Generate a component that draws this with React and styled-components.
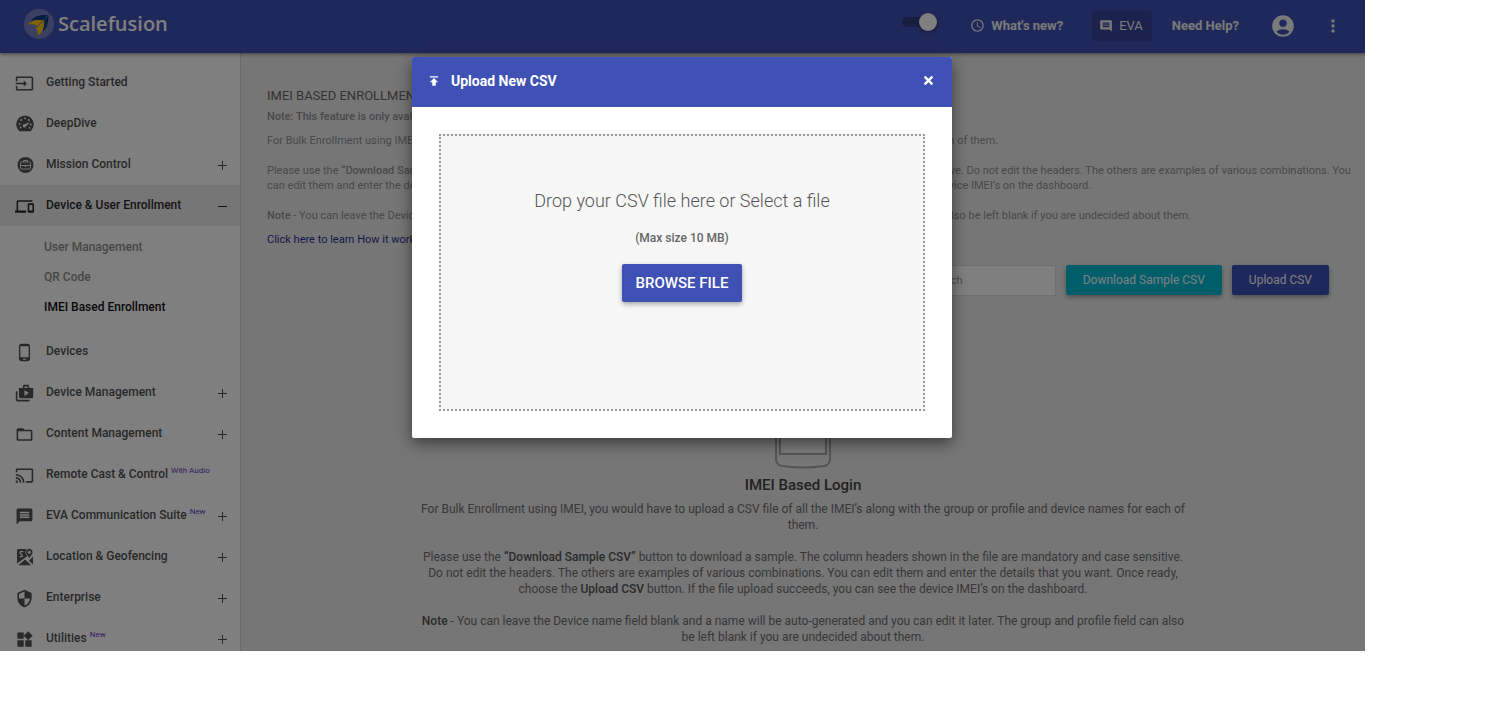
import React from "react";
import styled, { createGlobalStyle, css } from "styled-components";
import {
  MdInput, MdDevices, MdPhoneAndroid, MdShopTwo, MdFolderOpen, MdCast, MdMessage,
  MdSecurity, MdWidgets, MdPublish, MdAccessTime, MdComment, MdAccountCircle, MdMoreVert,
} from "react-icons/md";
import { FaTimes } from "react-icons/fa";

const GlobalStyle = createGlobalStyle`
  * { box-sizing: border-box; }
  body { margin: 0; background: #fff; font-family: Roboto, "Liberation Sans", sans-serif; font-size: 12px; color: #555; }
  button, input { font-family: inherit; }
  p, h1, h2, ul { margin: 0; padding: 0; }
  a { color: inherit; text-decoration: none; }
`;

const Page = styled.div`
  display: flex;
  height: 100vh;
  padding: 0 9vw 66px 0;
`;

const Shell = styled.div`
  position: relative;
  flex: 1;
  min-width: 0;
  display: flex;
  flex-direction: column;
  overflow: hidden;
`;

const Header = styled.header`
  display: flex;
  align-items: center;
  flex: 0 0 53px;
  padding: 0 24px 2px;
  background: #3f51b5;
  color: #fff;
  box-shadow: 0 1px 4px rgba(0, 0, 0, 0.5);
  z-index: 1;
`;

const Brand = styled.a`
  display: flex;
  align-items: center;
  gap: 4px;
  margin-right: auto;
  padding-bottom: 4px;
  font-family: "Open Sans", "Noto Sans", sans-serif;
  font-size: 20px;
  font-weight: 600;
  line-height: 30px;
`;

const ToggleLabel = styled.label`
  display: flex;
  margin-right: 33px;
  padding-bottom: 8px;
`;

const Toggle = styled.input`
  appearance: none;
  display: flex;
  align-items: center;
  justify-content: flex-end;
  width: 35px;
  height: 10px;
  margin: 0;
  border-radius: 5px;
  background: #303c80;
  &::before {
    content: "";
    width: 18px;
    height: 18px;
    border-radius: 50%;
    background: #fff;
    box-shadow: 0 1px 4px rgba(0, 0, 0, 0.4);
  }
`;

const HeaderButton = styled.button`
  display: flex;
  align-items: center;
  gap: 6px;
  height: 31px;
  padding: ${(p) => (p.$filled ? "0 9px 0 7px" : "0")};
  margin-right: ${(p) => p.$gap}px;
  border: 0;
  border-radius: 4px;
  background: ${(p) => (p.$filled ? "#39459c" : "transparent")};
  color: #f4f4f4;
  font-size: 13px;
  font-weight: ${(p) => (p.$filled ? 400 : 700)};
`;

const Columns = styled.div`
  display: flex;
  flex: 1;
  min-height: 0;
`;

const Sidebar = styled.nav`
  flex: 0 0 241px;
  padding-top: 9px;
  background: #fff;
  border-right: 1px solid #d8d8d8;
  overflow: hidden;
`;

const List = styled.ul`
  list-style: none;
`;

const NavItem = styled.a`
  display: flex;
  align-items: center;
  height: 41px;
  padding: 0 11px 1px 15px;
  font-weight: 500;
  color: ${(p) => (p.$active ? "#2a2a2a" : "#515151")};
  background: ${(p) => (p.$active ? "#ededed" : "transparent")};
`;

const IconSlot = styled.span`
  display: flex;
  justify-content: center;
  flex: 0 0 19px;
  margin-right: 12px;
  padding-top: 2px;
`;

const ExpandSlot = styled.span`
  display: flex;
  padding: 3px 1px 0 0;
`;

const NavText = styled.span`
  flex: 1;
  white-space: nowrap;
`;

const Badge = styled.sup`
  margin-left: 3px;
  font-size: 8px;
  font-weight: 400;
  line-height: 8px;
  color: #6a35c4;
`;

const SubList = styled.ul`
  list-style: none;
  padding: 6px 0 9px 44px;
`;

const SubItem = styled.a`
  display: flex;
  align-items: center;
  height: 30px;
  font-weight: 500;
  color: ${(p) => (p.$active ? "#111" : "#8d8d8d")};
`;

const Main = styled.main`
  flex: 1;
  min-width: 0;
  padding: 34px 12px 0;
  background: #ededed;
  overflow: hidden;
`;

const Intro = styled.section`
  padding-left: 14px;
`;

const PageTitle = styled.h1`
  font-size: 13px;
  font-weight: 400;
  line-height: 18px;
  color: #666;
`;

const Info = styled.p`
  font-size: 11px;
  line-height: 15px;
  color: #929292;
  margin-top: ${(p) => p.$top}px;
  font-weight: ${(p) => (p.$strong ? 500 : 400)};
  strong { font-weight: 500; }
`;

const LearnLink = styled.a`
  color: #302f94;
`;

const Toolbar = styled.div`
  display: flex;
  justify-content: flex-end;
  gap: 10px;
  margin-top: 18px;
  padding-right: 24px;
`;

const SearchBox = styled.input`
  width: 140px;
  height: 31px;
  padding: 0 12px;
  border: 1px solid #ddd;
  background: #fff;
  font-size: 11px;
  &::placeholder { color: #999; opacity: 1; }
`;

const raised = css`
  border: 0;
  border-radius: 2px;
  box-shadow: 0 2px 5px rgba(0, 0, 0, 0.35);
  color: #fff;
`;

const ActionButton = styled.button`
  ${raised}
  height: 30px;
  padding: 0 17px;
  background: ${(p) => (p.$primary ? "#3f51b5" : "#00bcd4")};
  font-size: 12px;
`;

const EmptyState = styled.section`
  display: flex;
  flex-direction: column;
  align-items: center;
  width: 770px;
  max-width: 100%;
  margin: 43px auto 0;
  text-align: center;
`;

const EmptyTitle = styled.h2`
  margin-top: 6px;
  font-size: 15px;
  font-weight: 500;
  line-height: 20px;
  color: #444;
`;

const EmptyText = styled.p`
  margin-top: ${(p) => p.$top}px;
  line-height: 16px;
  color: #6f6f6f;
  strong { font-weight: 500; color: #555; }
`;

const Overlay = styled.div`
  position: absolute;
  inset: 0;
  z-index: 2;
  display: flex;
  justify-content: center;
  align-items: flex-start;
  padding: 57px 1px 0 0;
  background: rgba(0, 0, 0, 0.5);
`;

const Dialog = styled.div`
  width: 540px;
  border-radius: 2px;
  overflow: hidden;
  background: #fff;
  box-shadow: 0 5px 15px rgba(0, 0, 0, 0.5);
`;

const DialogHeader = styled.div`
  display: flex;
  align-items: center;
  height: 50px;
  padding: 0 17px 2px 15px;
  background: #3f51b5;
  color: #fff;
`;

const DialogTitle = styled.h2`
  flex: 1;
  margin-left: 10px;
  font-size: 14px;
  font-weight: 700;
`;

const CloseButton = styled.button`
  display: flex;
  padding: 0 0 2px;
  border: 0;
  background: transparent;
  color: #fff;
`;

const DialogBody = styled.div`
  padding: 27px;
`;

const DropZone = styled.div`
  display: flex;
  flex-direction: column;
  align-items: center;
  height: 277px;
  padding-top: 53px;
  border: 2px dotted #999;
  background: #f7f7f7;
`;

const DropText = styled.p`
  font-size: 18px;
  font-weight: 300;
  line-height: 24px;
  color: #555;
`;

const DropHint = styled.p`
  margin-top: 17px;
  font-size: 12px;
  font-weight: 500;
  line-height: 16px;
  color: #666;
`;

const BrowseButton = styled.button`
  ${raised}
  height: 38px;
  margin-top: 18px;
  padding: 0 14px;
  background: #3f51b5;
  font-size: 15px;
  font-weight: 500;
`;

const LogoMark = () => (
  <svg width="30" height="30" viewBox="0 0 30 30" aria-hidden="true">
    <circle cx="15" cy="15" r="15" fill="#7780c4" />
    <path d="M6.500 12.500C9.500 7.500 14 5.500 24.500 6C24.500 13 23.500 19.500 18.500 22.500L19.500 11.500L12 10.800Z" fill="#063a80" />
    <path d="M4 15.500C7 11.500 11.500 10.500 20 11L13.500 17.200C11 15.300 8 15 4 15.500Z" fill="#ffc400" />
    <path d="M20.200 11.300C20.500 18.500 19 23.500 14 26.500C14.200 23.500 13.200 20.500 11.500 19Z" fill="#ffc400" />
    <path d="M12 18.800L24.500 6" stroke="#7780c4" strokeWidth="1" />
  </svg>
);

const GaugeIcon = () => (
  <svg width="18" height="18" viewBox="0 0 18 18" aria-hidden="true">
    <path d="M9 .8A8.600 8.600 0 0 1 15.600 15L14.500 16.200H3.500L2.400 15A8.600 8.600 0 0 1 9 .8Z" fill="currentColor" />
    <g fill="#fff">
      <circle cx="9" cy="3.400" r=".9" />
      <circle cx="5.200" cy="5" r=".9" />
      <circle cx="12.800" cy="5" r=".9" />
      <circle cx="3.500" cy="8.800" r=".9" />
      <circle cx="14.700" cy="9.500" r=".9" />
      <circle cx="4.500" cy="12.500" r=".9" />
      <circle cx="13.500" cy="12.800" r=".9" />
    </g>
    <path d="M14 7L9.900 11.300A1.600 1.600 0 1 1 8.600 9.300Z" fill="#fff" />
  </svg>
);

const MissionIcon = () => (
  <svg width="18" height="18" viewBox="0 0 18 18" aria-hidden="true">
    <circle cx="9.500" cy="9" r="8" fill="#555" />
    <path d="M7.500 6V4.500h4V6" fill="none" stroke="#eee" strokeWidth="1" />
    <rect x="4.500" y="6" width="10" height="7" rx="1" fill="none" stroke="#ddd" strokeWidth="1" />
    <path d="M4.500 9.500h10" stroke="#eee" strokeWidth="1" />
    <circle cx="9.500" cy="9.800" r="1.100" fill="#eee" />
  </svg>
);

const MapIcon = () => (
  <svg width="18" height="18" viewBox="0 0 18 18" aria-hidden="true">
    <path d="M2.500 1H10.500C9.300 4 10 6 11.500 8L1 15.500V2.500Q1 1 2.500 1Z" fill="currentColor" />
    <path d="M7.200 4.200Q5.800 2.700 4.500 3.700T5 6T6.600 8T3.600 8.600" fill="none" stroke="#fff" strokeWidth="1.200" />
    <path d="M2.500 17.200L9 11.500L15.300 17.200Z" fill="currentColor" />
    <path d="M13 12.800L17 8.500V16.500z" fill="currentColor" />
    <path
      d="M13.300 .5a3.600 3.600 0 0 1 3.600 3.600c0 2.500-2.300 3.500-3.600 7.200c-1.300-3.700-3.600-4.700-3.600-7.200A3.600 3.600 0 0 1 13.300 .5z"
      fill="currentColor"
      stroke="#fff"
      strokeWidth=".7"
    />
    <circle cx="13.300" cy="4.200" r="1.500" fill="#fff" />
  </svg>
);

const ExpandMark = ({ open }) => (
  <svg width="11" height="11" viewBox="0 0 11 11" aria-hidden="true">
    <path d={open ? "M1 5.500H10" : "M1 5.500H10M5.500 1V10"} stroke="currentColor" />
  </svg>
);

const PhoneDrawing = () => (
  <svg width="58" height="130" viewBox="0 0 58 130" aria-hidden="true">
    <path
      d="M2 12Q2 5 8 4Q29 0 50 4Q56 5 56 12V120Q56 126 50 127Q29 130 8 127Q2 126 2 120Z"
      fill="#efefef"
      stroke="#aaa"
      strokeWidth="2"
    />
    <rect x="6" y="16" width="46" height="99" fill="#f7f7f7" stroke="#aaa" strokeWidth="2" />
  </svg>
);

const TOP_ITEMS = [
  { label: "Getting Started", icon: <MdInput size={19} /> },
  { label: "DeepDive", icon: <GaugeIcon /> },
  { label: "Mission Control", icon: <MissionIcon />, expand: true },
  { label: "Device & User Enrollment", icon: <MdDevices size={19} />, expand: true, active: true },
];

const SUB_ITEMS = [
  { label: "User Management" },
  { label: "QR Code" },
  { label: "IMEI Based Enrollment", active: true },
];

const BOTTOM_ITEMS = [
  { label: "Devices", icon: <MdPhoneAndroid size={19} /> },
  { label: "Device Management", icon: <MdShopTwo size={19} />, expand: true },
  { label: "Content Management", icon: <MdFolderOpen size={19} />, expand: true },
  { label: "Remote Cast & Control", icon: <MdCast size={19} />, badge: "With Audio" },
  { label: "EVA Communication Suite", icon: <MdMessage size={19} />, badge: "New", expand: true },
  { label: "Location & Geofencing", icon: <MapIcon />, expand: true },
  { label: "Enterprise", icon: <MdSecurity size={19} />, expand: true },
  { label: "Utilities", icon: <MdWidgets size={19} />, badge: "New", expand: true },
];

const NavEntry = ({ item }) => (
  <li>
    <NavItem href="#" $active={item.active}>
      <IconSlot>{item.icon}</IconSlot>
      <NavText>
        {item.label}
        {item.badge && <Badge>{item.badge}</Badge>}
      </NavText>
      {item.expand && (
        <ExpandSlot>
          <ExpandMark open={item.active} />
        </ExpandSlot>
      )}
    </NavItem>
  </li>
);

export default function App() {
  return (
    <Page>
      <GlobalStyle />
      <Shell>
        <Header>
          <Brand href="#">
            <LogoMark />
            Scalefusion
          </Brand>
          <ToggleLabel>
            <Toggle type="checkbox" role="switch" defaultChecked aria-label="Switch dashboard" />
          </ToggleLabel>
          <HeaderButton type="button" $gap={29}>
            <MdAccessTime size={15} />
            What's new?
          </HeaderButton>
          <HeaderButton type="button" $filled $gap={20}>
            <MdComment size={14} />
            EVA
          </HeaderButton>
          <HeaderButton type="button" $gap={31}>Need Help?</HeaderButton>
          <HeaderButton type="button" aria-label="Account" $gap={27}>
            <MdAccountCircle size={26} />
          </HeaderButton>
          <HeaderButton type="button" aria-label="More options" $gap={-2}>
            <MdMoreVert size={20} />
          </HeaderButton>
        </Header>

        <Columns>
          <Sidebar>
            <List>
              {TOP_ITEMS.map((item) => (
                <NavEntry key={item.label} item={item} />
              ))}
            </List>
            <SubList>
              {SUB_ITEMS.map((item) => (
                <li key={item.label}>
                  <SubItem href="#" $active={item.active}>{item.label}</SubItem>
                </li>
              ))}
            </SubList>
            <List>
              {BOTTOM_ITEMS.map((item) => (
                <NavEntry key={item.label} item={item} />
              ))}
            </List>
          </Sidebar>

          <Main>
            <Intro>
              <PageTitle>IMEI BASED ENROLLMENT</PageTitle>
              <Info $top={4} $strong>Note: This feature is only available on Enterprise plan.</Info>
              <Info $top={9}>
                For Bulk Enrollment using IMEI, you would have to upload a CSV file of all the IMEI’s along with the
                group or profile and device names for each of them.
              </Info>
              <Info $top={15}>
                Please use the <strong>“Download Sample CSV”</strong> button to download a sample. The column headers
                shown in the file are mandatory and case sensitive. Do not edit the headers. The others are examples
                of various combinations. You can edit them and enter the details that you want. Once ready, choose
                the <strong>Upload CSV</strong> button. If the file upload succeeds, you can see the device IMEI’s on
                the dashboard.
              </Info>
              <Info $top={15}>
                <strong>Note</strong> - You can leave the Device name field blank and a name will be auto-generated
                and you can edit it later. The group and profile field can also be left blank if you are undecided
                about them.
              </Info>
              <Info $top={9}>
                <LearnLink href="#">Click here to learn How it works</LearnLink>
              </Info>
            </Intro>

            <Toolbar>
              <SearchBox type="search" placeholder="Search" aria-label="Search" />
              <ActionButton type="button">Download Sample CSV</ActionButton>
              <ActionButton type="button" $primary>Upload CSV</ActionButton>
            </Toolbar>

            <EmptyState>
              <PhoneDrawing />
              <EmptyTitle>IMEI Based Login</EmptyTitle>
              <EmptyText $top={6}>
                For Bulk Enrollment using IMEI, you would have to upload a CSV file of all the IMEI’s along with the
                group or profile and device names for each of them.
              </EmptyText>
              <EmptyText $top={16}>
                Please use the <strong>“Download Sample CSV”</strong> button to download a sample. The column headers
                shown in the file are mandatory and case sensitive. Do not edit the headers. The others are examples
                of various combinations. You can edit them and enter the details that you want. Once ready, choose
                the <strong>Upload CSV</strong> button. If the file upload succeeds, you can see the device IMEI’s on
                the dashboard.
              </EmptyText>
              <EmptyText $top={16}>
                <strong>Note</strong> - You can leave the Device name field blank and a name will be auto-generated
                and you can edit it later. The group and profile field can also be left blank if you are undecided
                about them.
              </EmptyText>
            </EmptyState>
          </Main>
        </Columns>

        <Overlay>
          <Dialog role="dialog" aria-modal="true" aria-labelledby="upload-title">
            <DialogHeader>
              <MdPublish size={14} />
              <DialogTitle id="upload-title">Upload New CSV</DialogTitle>
              <CloseButton type="button" aria-label="Close">
                <FaTimes size={13} />
              </CloseButton>
            </DialogHeader>
            <DialogBody>
              <DropZone>
                <DropText>Drop your CSV file here or Select a file</DropText>
                <DropHint>(Max size 10 MB)</DropHint>
                <BrowseButton type="button">BROWSE FILE</BrowseButton>
              </DropZone>
            </DialogBody>
          </Dialog>
        </Overlay>
      </Shell>
    </Page>
  );
}
